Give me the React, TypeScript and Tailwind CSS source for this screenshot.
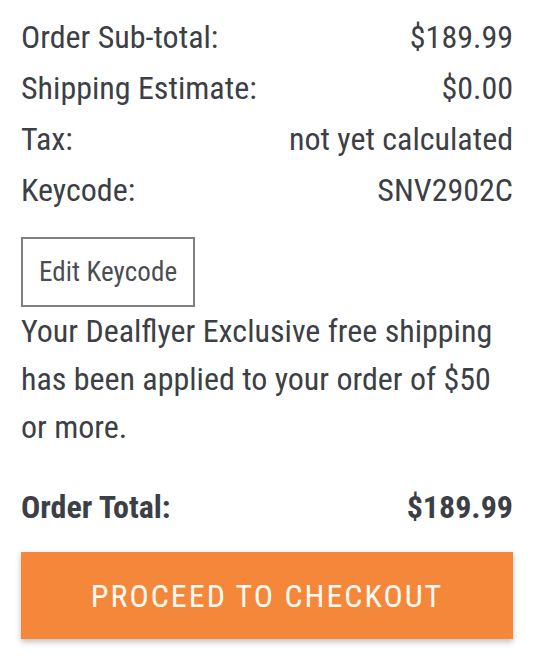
const rows = [
  { label: "Order Sub-total:", value: "$189.99" },
  { label: "Shipping Estimate:", value: "$0.00" },
  { label: "Tax:", value: "not yet calculated" },
  { label: "Keycode:", value: "SNV2902C" },
];

const font = { fontFamily: '"Roboto Condensed", Roboto, "Liberation Sans", sans-serif' } as const;

export default function App() {
  return (
    <div className="min-h-screen bg-white text-[#3c3f46]" style={font}>
      <div className="px-[21px] pt-[12px] pb-4 w-[534px]">
        {/* Summary lines */}
        <div className="flex flex-col">
          {rows.map((r) => (
            <div key={r.label} className="flex justify-between text-[32px] leading-[51px]">
              <span>{r.label}</span>
              <span>{r.value}</span>
            </div>
          ))}
        </div>

        <button className="mt-[21px] h-[70px] px-[16px] border-2 border-[#7f7f7f] text-[27px] tracking-[0.1px] text-[#4a4d53] bg-white">
          Edit Keycode
        </button>

        <p className="text-[32px] leading-[48px]">
          Your Dealflyer Exclusive free shipping has been applied to your order of $50 or more.
        </p>

        <div className="mt-[31px] flex justify-between text-[32px] leading-[51px] font-bold">
          <span>Order Total:</span>
          <span>$189.99</span>
        </div>

        <button className="mt-[19px] w-full h-[87px] bg-[#f5873a] text-[#fffaf2] text-[32px] tracking-[2px] shadow-[0_3px_6px_rgba(0,0,0,0.25)]">
          PROCEED TO CHECKOUT
        </button>
      </div>
    </div>
  );
}
